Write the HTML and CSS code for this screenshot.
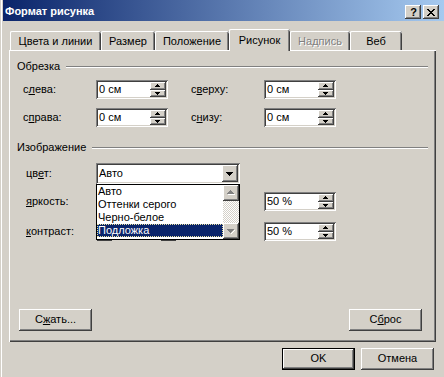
FILE: index.html
```html
<!DOCTYPE html>
<html lang="ru">
<head>
<meta charset="utf-8">
<title>Формат рисунка</title>
<link rel="stylesheet" href="styles.css">
</head>
<body>
<div class="window">
  <div class="titlebar">
    <span class="title">Формат рисунка</span>
    <div class="caption-btns">
      <span class="cbtn help">?</span>
      <span class="cbtn close"><svg width="8" height="7" viewBox="0 0 8 7" shape-rendering="crispEdges"><path fill="#000" d="M0 0h2v1H0zM6 0h2v1H6zM1 1h2v1H1zM5 1h2v1H5zM2 2h4v1H2zM3 3h2v1H3zM2 4h4v1H2zM1 5h2v1H1zM5 5h2v1H5zM0 6h2v1H0zM6 6h2v1H6z"/></svg></span>
    </div>
  </div>

  <div class="tabs">
    <div class="tab t1">Цвета и линии</div>
    <div class="tab t2">Размер</div>
    <div class="tab t3">Положение</div>
    <div class="tab t4 active">Рисунок</div>
    <div class="tab t5 disabled">Надпись</div>
    <div class="tab t6">Веб</div>
  </div>

  <div class="panel">
    <div class="ghead ghead1"><span>Обрезка</span><i class="etch"></i></div>
    <div class="row crop-row first">
      <span class="lbl">с<u>л</u>ева:</span>
      <div class="spin"><span class="val">0 см</span><span class="spinbtns"><b class="sbtn up"></b><b class="sbtn down"></b></span></div>
      <span class="lbl lbl2">с<u>в</u>ерху:</span>
      <div class="spin"><span class="val">0 см</span><span class="spinbtns"><b class="sbtn up"></b><b class="sbtn down"></b></span></div>
    </div>
    <div class="row crop-row second">
      <span class="lbl">с<u>п</u>рава:</span>
      <div class="spin"><span class="val">0 см</span><span class="spinbtns"><b class="sbtn up"></b><b class="sbtn down"></b></span></div>
      <span class="lbl lbl2">с<u>н</u>изу:</span>
      <div class="spin"><span class="val">0 см</span><span class="spinbtns"><b class="sbtn up"></b><b class="sbtn down"></b></span></div>
    </div>

    <div class="ghead ghead2"><span>Изображение</span><i class="etch"></i></div>
    <div class="row img-row color-row">
      <span class="lbl lbl-img">цв<u>е</u>т:</span>
      <div class="combo">
        <span class="val">Авто</span>
        <span class="combo-btn"><i class="arrow-down7"></i></span>
        <div class="list">
          <div class="items">
            <div class="item">Авто</div>
            <div class="item">Оттенки серого</div>
            <div class="item">Черно-белое</div>
            <div class="item sel">Подложка</div>
          </div>
          <div class="sb">
            <span class="sb-btn"><i class="arrow-up7 dis"></i></span>
            <span class="sb-btn"><i class="arrow-down7 dis"></i></span>
          </div>
        </div>
      </div>
    </div>
    <div class="row img-row bright-row">
      <span class="lbl lbl-img"><u>я</u>ркость:</span>
      <div class="slider"><span class="thumb t-left"></span><span class="thumb t-mid"></span></div>
      <div class="spin"><span class="val">50 %</span><span class="spinbtns"><b class="sbtn up"></b><b class="sbtn down"></b></span></div>
    </div>
    <div class="row img-row contrast-row">
      <span class="lbl lbl-img"><u>к</u>онтраст:</span>
      <div class="slider"><span class="thumb t-left"></span><span class="thumb t-mid"></span></div>
      <div class="spin"><span class="val">50 %</span><span class="spinbtns"><b class="sbtn up"></b><b class="sbtn down"></b></span></div>
    </div>

    <div class="panel-btns">
      <div class="btn">С<u>ж</u>ать...</div>
      <div class="btn">С<u>б</u>рос</div>
    </div>
  </div>

  <div class="footer">
    <div class="btn default">OK</div>
    <div class="btn">Отмена</div>
  </div>
</div>
</body>
</html>
```

FILE: styles.css
```css
* {
  box-sizing: border-box;
  margin: 0;
  padding: 0;
}

html, body {
  background: #d4d0c8;
}

body {
  font: 11px/13px "Liberation Sans", Arial, sans-serif;
  color: #000;
}

u {
  text-decoration: underline;
  text-underline-offset: 1px;
}

.window {
  width: 444px;
  height: 377px;
  background: #d4d0c8;
  box-shadow: inset 1px 0 #d4d0c8, inset 2px 0 #fff;
  display: flex;
  flex-direction: column;
  overflow: hidden;
}

/* ---------- title bar ---------- */
.titlebar {
  height: 21px;
  margin-left: 3px;
  padding: 0 5px 0 2px;
  background: linear-gradient(to right, #0a246a, #a6caf0);
  display: flex;
  justify-content: space-between;
  align-items: flex-start;
  flex: none;
}

.title {
  color: #fff;
  font-weight: bold;
  padding-top: 5px;
  line-height: 13px;
}

.caption-btns {
  display: flex;
  gap: 2px;
  margin-top: 5px;
}

.cbtn {
  width: 16px;
  height: 14px;
  background: #d4d0c8;
  box-shadow: inset -1px -1px #404040, inset 1px 1px #fff, inset -2px -2px #808080;
  display: flex;
  align-items: center;
  justify-content: center;
}

.cbtn.help {
  font-weight: bold;
  font-size: 11px;
  line-height: 12px;
  padding-left: 1px;
}

.cbtn svg {
  display: block;
}

/* ---------- tabs ---------- */
.tabs {
  display: flex;
  align-items: flex-end;
  height: 21px;
  margin: 8px 0 0 10px;
  position: relative;
  z-index: 1;
  flex: none;
}

.tab {
  height: 19px;
  padding-top: 3px;
  line-height: 15px;
  text-align: center;
  background: #d4d0c8;
  border-radius: 2px 2px 0 0;
  box-shadow: inset 1px 0 #fff, inset 0 1px #fff, inset -1px 0 #404040, inset -2px 0 #808080;
  white-space: nowrap;
}

.t1 { width: 91px; }
.t2 { width: 54px; }
.t3 { width: 74px; }
.t4 { width: 61px; }
.t5 { width: 60px; }
.t6 { width: 52px; }

.tab.active {
  height: 22px;
  margin-bottom: -1px;
  padding-top: 4px;
}

.tab.disabled {
  color: #808080;
  text-shadow: 1px 1px #fff;
}

/* ---------- panel ---------- */
.panel {
  margin-left: 9px;
  width: 427px;
  height: 292px;
  flex: none;
  box-shadow: inset 1px 1px #fff, inset -1px -1px #404040, inset -2px -2px #808080;
  display: flex;
  flex-direction: column;
}

.ghead {
  display: flex;
  align-items: flex-start;
  height: 13px;
  margin: 0 8px 0 8px;
}

.ghead1 { margin-top: 10px; }
.ghead2 { margin-top: 14px; }

.etch {
  flex: 1;
  height: 2px;
  margin-top: 6px;
  margin-left: 6px;
  border-top: 1px solid #808080;
  border-bottom: 1px solid #fff;
}

.row {
  display: flex;
  align-items: center;
}

.crop-row {
  margin-left: 14px;
  height: 19px;
}

.crop-row.first { margin-top: 7px; }
.crop-row.second { margin-top: 9px; }

.lbl {
  width: 73px;
  white-space: nowrap;
}

.lbl2 {
  margin-left: 23px;
}

.img-row {
  margin-left: 17px;
}

.lbl-img {
  width: 70px;
}

.color-row {
  margin-top: 9px;
  height: 21px;
}

.bright-row {
  margin-top: 8px;
  height: 19px;
}

.contrast-row {
  margin-top: 11px;
  height: 19px;
}

/* ---------- spin box ---------- */
.spin {
  width: 72px;
  height: 19px;
  background: #fff;
  box-shadow: inset 1px 1px #808080, inset -1px -1px #fff, inset 2px 2px #404040, inset -2px -2px #d4d0c8;
  padding: 2px;
  display: flex;
  flex: none;
}

.spin .val {
  flex: 1;
  padding-left: 1px;
  line-height: 15px;
  white-space: nowrap;
}

.spinbtns {
  width: 16px;
  display: flex;
  flex-direction: column;
}

.sbtn {
  flex: 1;
  background: #d4d0c8;
  box-shadow: inset -1px -1px #404040, inset 1px 1px #fff, inset -2px -2px #808080;
  position: relative;
}

.sbtn::after {
  content: "";
  position: absolute;
  width: 1px;
  height: 1px;
  background: #000;
  left: 7px;
}

.sbtn.up::after {
  top: 2px;
  box-shadow: -1px 1px #000, 0 1px #000, 1px 1px #000,
              -2px 2px #000, -1px 2px #000, 0 2px #000, 1px 2px #000, 2px 2px #000;
}

.sbtn.down::after {
  top: 2px;
  box-shadow: -2px 0 #000, -1px 0 #000, 1px 0 #000, 2px 0 #000,
              -1px 1px #000, 0 1px #000, 1px 1px #000,
              0 2px #000;
}

/* ---------- combo ---------- */
.combo {
  width: 144px;
  height: 21px;
  position: relative;
  background: #fff;
  box-shadow: inset 1px 1px #808080, inset -1px -1px #fff, inset 2px 2px #404040, inset -2px -2px #d4d0c8;
  padding: 2px;
  display: flex;
  flex: none;
  z-index: 5;
}

.combo > .val {
  flex: 1;
  padding-left: 1px;
  line-height: 17px;
}

.combo-btn {
  width: 16px;
  height: 17px;
  background: #d4d0c8;
  box-shadow: inset -1px -1px #404040, inset 1px 1px #fff, inset -2px -2px #808080;
  position: relative;
}

.arrow-down7, .arrow-up7 {
  position: absolute;
  width: 1px;
  height: 1px;
  left: 7px;
  background: #000;
}

.combo-btn .arrow-down7 {
  top: 7px;
}

.arrow-down7 {
  box-shadow: -3px 0 #000, -2px 0 #000, -1px 0 #000, 1px 0 #000, 2px 0 #000, 3px 0 #000,
              -2px 1px #000, -1px 1px #000, 0 1px #000, 1px 1px #000, 2px 1px #000,
              -1px 2px #000, 0 2px #000, 1px 2px #000,
              0 3px #000;
}

.arrow-up7.dis {
  background: #808080;
  box-shadow: 0 1px #808080, -1px 1px #808080, 1px 1px #808080,
              -2px 2px #808080, -1px 2px #808080, 0 2px #808080, 1px 2px #808080, 2px 2px #808080,
              -3px 3px #808080, -2px 3px #808080, -1px 3px #808080, 0 3px #808080, 1px 3px #808080, 2px 3px #808080, 3px 3px #808080,
              1px 1px #fff, 2px 2px #fff, 3px 3px #fff, 4px 4px #fff, -2px 4px #fff, -1px 4px #fff, 0 4px #fff, 1px 4px #fff, 2px 4px #fff, 3px 4px #fff;
}

.arrow-down7.dis {
  background: #808080;
  box-shadow: -3px 0 #808080, -2px 0 #808080, -1px 0 #808080, 1px 0 #808080, 2px 0 #808080, 3px 0 #808080,
              -2px 1px #808080, -1px 1px #808080, 0 1px #808080, 1px 1px #808080, 2px 1px #808080,
              -1px 2px #808080, 0 2px #808080, 1px 2px #808080,
              0 3px #808080,
              4px 1px #fff, 3px 2px #fff, 2px 3px #fff, 1px 4px #fff;
}

/* ---------- dropdown list ---------- */
.list {
  position: absolute;
  top: 21px;
  left: 0;
  width: 144px;
  height: 56px;
  background: #fff;
  border: 1px solid #000;
  display: flex;
}

.items {
  flex: 1;
}

.item {
  height: 13px;
  line-height: 13px;
  padding-left: 1px;
  white-space: nowrap;
}

.item.sel {
  background: #0a246a;
  color: #fff;
  outline: 1px dotted #e8e0a0;
  outline-offset: -1px;
}

.sb {
  width: 16px;
  display: flex;
  flex-direction: column;
  justify-content: space-between;
  background: repeating-conic-gradient(#fff 0 25%, #d4d0c8 0 50%) 0 0 / 2px 2px;
}

.sb-btn {
  height: 16px;
  background: #d4d0c8;
  box-shadow: inset -1px -1px #404040, inset 1px 1px #fff, inset -2px -2px #808080;
  position: relative;
}

.sb-btn .arrow-up7 { top: 5px; }
.sb-btn .arrow-down7 { top: 6px; }

/* ---------- slider (hidden under list) ---------- */
.slider {
  width: 168px;
  height: 19px;
  display: flex;
  flex: none;
}

.thumb {
  width: 15px;
  height: 19px;
  background: #d4d0c8;
  box-shadow: inset -1px -1px #404040, inset 1px 1px #fff, inset -2px -2px #808080;
}

.t-left { margin-left: 1px; }
.t-mid { margin-left: 49px; }

/* ---------- buttons ---------- */
.btn {
  width: 73px;
  height: 22px;
  background: #d4d0c8;
  box-shadow: inset -1px -1px #404040, inset 1px 1px #fff, inset -2px -2px #808080;
  display: flex;
  align-items: center;
  justify-content: center;
  padding-bottom: 1px;
}

.btn.default {
  border: 1px solid #000;
}

.panel-btns {
  margin: auto 14px 11px 10px;
  display: flex;
  justify-content: space-between;
}

.footer {
  margin-top: 6px;
  padding-right: 10px;
  display: flex;
  justify-content: flex-end;
  gap: 6px;
}
```
